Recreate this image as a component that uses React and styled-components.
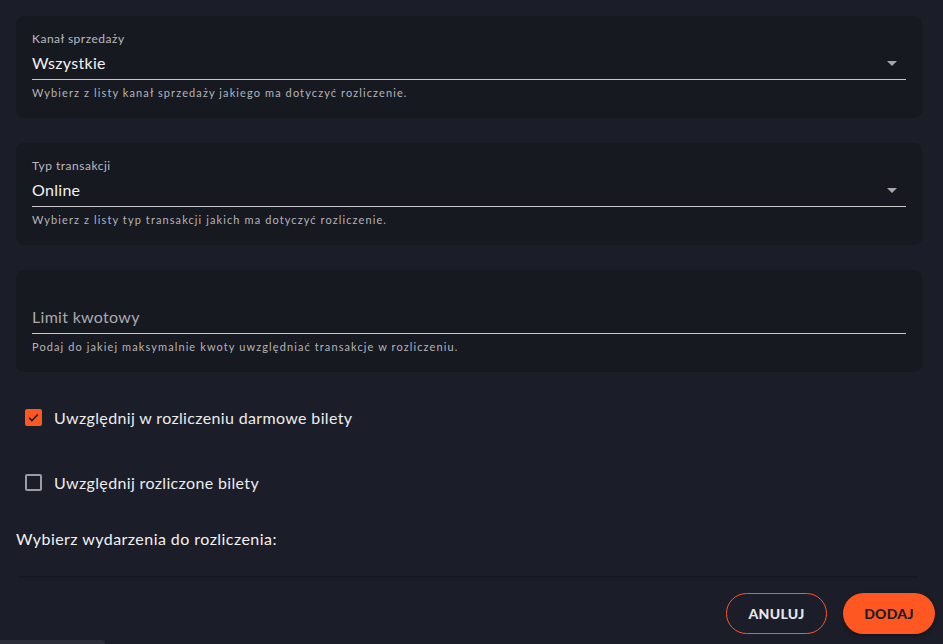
import React from "react";
import styled, { createGlobalStyle } from "styled-components";

const Global = createGlobalStyle`
  html, body { margin: 0; padding: 0; background: #1b1d28; }
  body { font-family: Lato, "Noto Sans", sans-serif; color: #ececec; }
  * { box-sizing: border-box; }
`;

const Page = styled.div`
  position: relative;
  height: 644px;
  overflow: hidden;
  display: flex;
  flex-direction: column;
`;

const Content = styled.div`
  padding: 16px 21px 0 16px;
  display: flex;
  flex-direction: column;
`;

const Card = styled.div`
  background: #171921;
  border-radius: 8px;
  padding: 15px 16px 17px;
  margin-bottom: 25px;
`;

const Label = styled.div`
  font-size: 12px;
  line-height: 16px;
  height: 16px;
  color: #b9bac0;
  letter-spacing: 0.5px;
`;

const InputRow = styled.div`
  margin-top: 4px;
  display: flex;
  align-items: center;
  justify-content: space-between;
  height: 29px;
  padding-bottom: 4px;
  border-bottom: 1px solid #c9c9cc;
`;

const Value = styled.div`
  font-size: 16px;
  line-height: 24px;
  color: ${(p) => (p.$placeholder ? "#a9aab0" : "#f2f2f2")};
  letter-spacing: 0.3px;
`;

const Arrow = styled.svg`
  width: 24px;
  height: 24px;
  margin-right: 2px;
  fill: #a7a7aa;
`;

const Helper = styled.div`
  margin-top: 5px;
  font-size: 11px;
  line-height: 16px;
  color: #b3b4ba;
  letter-spacing: 1.1px;
`;

const CheckRow = styled.label`
  display: flex;
  align-items: center;
  gap: 12px;
  height: 40px;
  padding-left: 9px;
  margin-top: ${(p) => p.$mt || "0"};
  font-size: 16px;
  color: #ececec;
  letter-spacing: 0.35px;
`;

const Box = styled.span`
  width: 17px;
  height: 17px;
  border-radius: 2px;
  display: flex;
  align-items: center;
  justify-content: center;
  background: ${(p) => (p.$checked ? "#ff5722" : "transparent")};
  border: ${(p) => (p.$checked ? "none" : "2px solid #9c9da2")};
`;

const Heading = styled.div`
  margin-top: 25px;
  font-size: 16px;
  line-height: 24px;
  color: #f2f2f2;
  letter-spacing: 0.45px;
`;

const Divider = styled.div`
  margin: 25px 25px 0 19px;
  height: 1px;
  background: #15171e;
  box-shadow: 0 1px 1px rgba(0, 0, 0, 0.12);
`;

const Footer = styled.div`
  display: flex;
  justify-content: flex-end;
  gap: 16px;
  padding: 16px 8px 0 0;
`;

const Button = styled.button`
  height: 41px;
  width: ${(p) => p.$w}px;
  border-radius: 21px;
  font-family: Lato, "Noto Sans", sans-serif;
  font-weight: 900;
  font-size: 14px;
  letter-spacing: 0.3px;
  text-transform: uppercase;
  cursor: pointer;
  background: ${(p) => (p.$primary ? "#ff5722" : "transparent")};
  color: ${(p) => (p.$primary ? "#1b1d28" : "#e6e6e6")};
  border: ${(p) => (p.$primary ? "none" : "1px solid #ff5722")};
  box-shadow: ${(p) => (p.$primary ? "0 2px 4px rgba(0,0,0,0.3)" : "none")};
`;

const Snack = styled.div`
  position: absolute;
  left: 0;
  bottom: 0;
  width: 105px;
  height: 4px;
  background: #2b2d38;
  border-top-right-radius: 4px;
`;

const SelectField = ({ label, value, helper, select, placeholder }) => (
  <Card>
    <Label>{label}</Label>
    <InputRow>
      <Value $placeholder={placeholder}>{value}</Value>
      {select && (
        <Arrow viewBox="0 0 24 24">
          <path d="M7 10l5 5 5-5z" />
        </Arrow>
      )}
    </InputRow>
    <Helper>{helper}</Helper>
  </Card>
);

export default function App() {
  return (
    <Page>
      <Global />
      <Content>
        <SelectField
          label="Kanał sprzedaży"
          value="Wszystkie"
          helper="Wybierz z listy kanał sprzedaży jakiego ma dotyczyć rozliczenie."
          select
        />
        <SelectField
          label="Typ transakcji"
          value="Online"
          helper="Wybierz z listy typ transakcji jakich ma dotyczyć rozliczenie."
          select
        />
        <SelectField
          label=""
          value="Limit kwotowy"
          placeholder
          helper="Podaj do jakiej maksymalnie kwoty uwzględniać transakcje w rozliczeniu."
        />
        <CheckRow>
          <Box $checked>
            <svg width="13" height="13" viewBox="0 0 24 24">
              <path d="M4 12.5l5 5L20 6.5" fill="none" stroke="#1b1d28" strokeWidth="3" />
            </svg>
          </Box>
          Uwzględnij w rozliczeniu darmowe bilety
        </CheckRow>
        <CheckRow $mt="25px">
          <Box />
          Uwzględnij rozliczone bilety
        </CheckRow>
        <Heading>Wybierz wydarzenia do rozliczenia:</Heading>
      </Content>
      <Divider />
      <Footer>
        <Button $w={101}>Anuluj</Button>
        <Button $w={92} $primary>
          Dodaj
        </Button>
      </Footer>
      <Snack />
    </Page>
  );
}
